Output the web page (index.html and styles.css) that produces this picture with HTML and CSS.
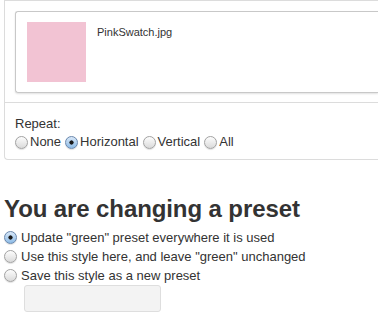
FILE: index.html
```html
<!DOCTYPE html>
<html lang="en">
<head>
    <meta charset="UTF-8">
    <title>Preset style</title>
    <link rel="stylesheet" href="styles.css">
</head>
<body>
    <div class="style-panel">
        <div class="panel-top">
            <div class="file-card">
                <div class="swatch"></div>
                <div class="file-name">PinkSwatch.jpg</div>
            </div>
        </div>
        <div class="panel-repeat">
            <div class="field-label">Repeat:</div>
            <div class="radio-row">
                <label class="radio-label"><input type="radio" name="repeat" class="radio">None</label>
                <label class="radio-label"><input type="radio" name="repeat" class="radio" checked>Horizontal</label>
                <label class="radio-label"><input type="radio" name="repeat" class="radio">Vertical</label>
                <label class="radio-label"><input type="radio" name="repeat" class="radio">All</label>
            </div>
        </div>
    </div>

    <div class="preset-box">
        <h1>You are changing a preset</h1>
        <label class="preset-option"><input type="radio" name="preset" class="radio" checked>Update "green" preset everywhere it is used</label>
        <label class="preset-option"><input type="radio" name="preset" class="radio">Use this style here, and leave "green" unchanged</label>
        <label class="preset-option"><input type="radio" name="preset" class="radio">Save this style as a new preset</label>
        <input type="text" class="preset-name">
    </div>
</body>
</html>
```

FILE: styles.css
```css
body {
    margin: 0;
    overflow: hidden;
    font-family: 'Liberation Sans', Arial, sans-serif;
    font-size: 13px;
    color: #333;
    background: #fff;
}
/* panel continues past the right edge, so no right border */
.style-panel {
    margin-left: 4px;
    border: 1px solid #dcdcdc;
    border-right: none;
    border-bottom-left-radius: 4px;
}
.panel-top {
    padding: 10px 0 9px 10px;
    border-bottom: 1px solid #dcdcdc;
}
.file-card {
    display: flex;
    align-items: flex-start;
    padding: 10px 11px;
    border: 1px solid #c8c8c8;
    border-right: none;
    border-radius: 3px 0 0 3px;
    box-shadow: 0 1px 2px rgba(0,0,0,0.12);
}
.swatch {
    width: 59px;
    height: 60px;
    background: #f2c3d3;
    margin-right: 11px;
}
.file-name {
    font-size: 11px;
    line-height: 14px;
    margin-top: 3px;
    color: #333;
}
.panel-repeat {
    padding: 12px 10px 8px 10px;
}
.field-label {
    line-height: 18px;
}
.radio-row {
    display: flex;
    gap: 4px;
    line-height: 18px;
}
.radio-label, .preset-option {
    display: flex;
    align-items: center;
}
.radio {
    appearance: none;
    -webkit-appearance: none;
    width: 13px;
    height: 13px;
    margin: 0 2px 0 0;
    border: 1px solid #a2a2a2;
    border-radius: 50%;
    background: linear-gradient(#fdfdfd, #dadada);
    box-shadow: 0 1px 1px rgba(0,0,0,0.12);
    box-sizing: border-box;
}
.radio:checked {
    border-color: #6a88ad;
    background: radial-gradient(circle, #1a1a1a 0 1.8px, transparent 2.4px), linear-gradient(#d9e8f8, #8dbbe6);
}
.preset-box {
    padding-left: 4px;
    margin-top: 35px;
}
.preset-box h1 {
    margin: 0 0 5px 0;
    font-size: 24px;
    line-height: 28px;
    font-weight: bold;
    letter-spacing: -0.1px;
    color: #333;
}
.preset-option {
    line-height: 19px;
}
.preset-option .radio {
    margin-right: 4px;
}
.preset-name {
    display: block;
    margin: 0 0 0 20px;
    width: 137px;
    height: 27px;
    box-sizing: border-box;
    border: 1px solid #dedede;
    border-radius: 3px;
    background: #f3f3f3;
}
```
